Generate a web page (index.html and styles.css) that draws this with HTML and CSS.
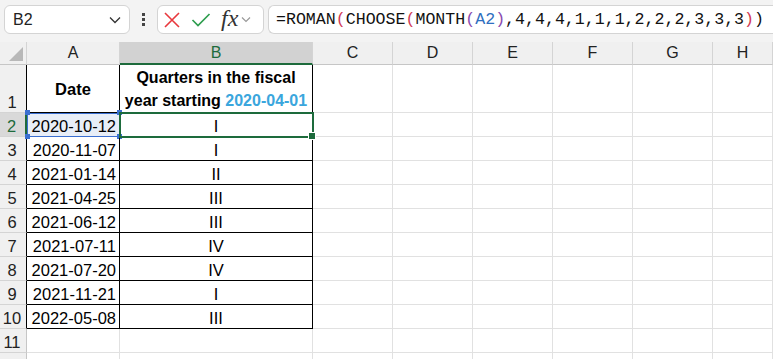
FILE: index.html
```html
<!DOCTYPE html>
<html lang="en">
<head>
    <meta charset="UTF-8">
    <title>ROMAN quarters</title>
    <link rel="stylesheet" href="styles.css">
</head>
<body>
    <div class="toolbar">
        <div class="namebox">
            <span>B2</span>
            <svg width="12" height="8" viewBox="0 0 12 8"><polyline points="1,1.5 6,6.5 11,1.5" fill="none" stroke="#333" stroke-width="1.3"/></svg>
        </div>
        <div class="dots"><i></i><i></i><i></i></div>
        <div class="fxbox">
            <svg width="18" height="18" viewBox="0 0 18 18"><path d="M2 2 L16 16 M16 2 L2 16" stroke="#e8383d" stroke-width="1.6" fill="none"/></svg>
            <svg width="20" height="18" viewBox="0 0 20 18"><polyline points="1.5,9 7,14.5 18.5,3" stroke="#2f9e4f" stroke-width="1.7" fill="none"/></svg>
            <span class="fx">fx</span>
            <svg width="10" height="7" viewBox="0 0 10 7"><polyline points="1,1.5 5,5.5 9,1.5" fill="none" stroke="#999" stroke-width="1.2"/></svg>
        </div>
        <div class="formula">=ROMAN<span class="p1">(</span>CHOOSE<span class="p1">(</span>MONTH<span class="p2">(</span><span class="ref">A2</span><span class="p2">)</span>,4,4,4,1,1,1,2,2,2,3,3,3<span class="p1">)</span>)</div>
    </div>

    <div class="sheet">
        <!-- column headers -->
        <div class="ch corner"><svg width="14" height="14" viewBox="0 0 14 14"><polygon points="14,0 14,14 0,14" fill="#b8b8b8"/></svg></div>
        <div class="ch">A</div>
        <div class="ch active">B</div>
        <div class="ch">C</div>
        <div class="ch">D</div>
        <div class="ch">E</div>
        <div class="ch">F</div>
        <div class="ch">G</div>
        <div class="ch">H</div>

        <!-- row 1 -->
        <div class="rh edge">1</div>
        <div class="c t head">Date</div>
        <div class="c t head wrap">Quarters in the fiscal<br>year starting <span class="blue">2020-04-01</span></div>
        <div class="c"></div><div class="c"></div><div class="c"></div><div class="c"></div><div class="c"></div><div class="c"></div>

        <!-- row 2 -->
        <div class="rh edge active">2</div>
        <div class="c t date dep">2020-10-12<i class="k tl"></i><i class="k tr"></i><i class="k bl"></i><i class="k br"></i></div>
        <div class="c t mid sel">I</div>
        <div class="c"></div><div class="c"></div><div class="c"></div><div class="c"></div><div class="c"></div><div class="c"></div>

        <div class="rh edge">3</div>
        <div class="c t date">2020-11-07</div>
        <div class="c t mid">I</div>
        <div class="c"></div><div class="c"></div><div class="c"></div><div class="c"></div><div class="c"></div><div class="c"></div>

        <div class="rh edge">4</div>
        <div class="c t date">2021-01-14</div>
        <div class="c t mid">II</div>
        <div class="c"></div><div class="c"></div><div class="c"></div><div class="c"></div><div class="c"></div><div class="c"></div>

        <div class="rh edge">5</div>
        <div class="c t date">2021-04-25</div>
        <div class="c t mid">III</div>
        <div class="c"></div><div class="c"></div><div class="c"></div><div class="c"></div><div class="c"></div><div class="c"></div>

        <div class="rh edge">6</div>
        <div class="c t date">2021-06-12</div>
        <div class="c t mid">III</div>
        <div class="c"></div><div class="c"></div><div class="c"></div><div class="c"></div><div class="c"></div><div class="c"></div>

        <div class="rh edge">7</div>
        <div class="c t date">2021-07-11</div>
        <div class="c t mid">IV</div>
        <div class="c"></div><div class="c"></div><div class="c"></div><div class="c"></div><div class="c"></div><div class="c"></div>

        <div class="rh edge">8</div>
        <div class="c t date">2021-07-20</div>
        <div class="c t mid">IV</div>
        <div class="c"></div><div class="c"></div><div class="c"></div><div class="c"></div><div class="c"></div><div class="c"></div>

        <div class="rh edge">9</div>
        <div class="c t date">2021-11-21</div>
        <div class="c t mid">I</div>
        <div class="c"></div><div class="c"></div><div class="c"></div><div class="c"></div><div class="c"></div><div class="c"></div>

        <div class="rh edge">10</div>
        <div class="c t date">2022-05-08</div>
        <div class="c t mid">III</div>
        <div class="c"></div><div class="c"></div><div class="c"></div><div class="c"></div><div class="c"></div><div class="c"></div>

        <div class="rh">11</div>
        <div class="c"></div><div class="c"></div>
        <div class="c"></div><div class="c"></div><div class="c"></div><div class="c"></div><div class="c"></div><div class="c"></div>

        <div class="rh"></div>
        <div class="c"></div><div class="c"></div>
        <div class="c"></div><div class="c"></div><div class="c"></div><div class="c"></div><div class="c"></div><div class="c"></div>
    </div>
</body>
</html>
```

FILE: styles.css
```css
body {
    margin: 0;
    width: 773px;
    height: 359px;
    overflow: hidden;
    background: #fff;
    font-family: "Liberation Sans", Arial, sans-serif;
    color: #000;
}

.toolbar {
    height: 42px;
    background: #f3f3f3;
    display: flex;
    align-items: flex-start;
    padding-top: 5px;
    box-sizing: border-box;
}

.namebox {
    margin-left: 4px;
    width: 126px;
    height: 29px;
    background: #fff;
    border: 1px solid #d4d4d4;
    border-radius: 6px;
    box-sizing: border-box;
    display: flex;
    align-items: center;
    justify-content: space-between;
    padding: 0 8px 0 8px;
    font-size: 16px;
    color: #222;
}

.dots {
    width: 27px;
    height: 29px;
    display: flex;
    flex-direction: column;
    align-items: center;
    justify-content: center;
    gap: 2px;
}

.dots i {
    display: block;
    width: 3px;
    height: 3px;
    background: #444;
}

.fxbox {
    width: 107px;
    height: 29px;
    background: #fff;
    border: 1px solid #d4d4d4;
    border-radius: 6px;
    box-sizing: border-box;
    display: flex;
    align-items: center;
    padding-left: 5px;
    gap: 10px;
}

.fxbox .fx {
    font-family: "Liberation Serif", serif;
    font-style: italic;
    font-size: 24px;
    color: #333;
    line-height: 1;
    margin-top: -4px;
}

.fxbox svg:last-child {
    margin-left: -7px;
}

.formula {
    margin-left: 4px;
    flex: 1;
    height: 29px;
    background: #fff;
    border: 1px solid #d4d4d4;
    border-right: none;
    border-radius: 6px 0 0 6px;
    box-sizing: border-box;
    padding-left: 7px;
    font-family: "Liberation Mono", monospace;
    font-size: 16.6px;
    line-height: 28px;
    white-space: nowrap;
    color: #111;
}

.p1 { color: #d23a55; }
.p2 { color: #8a4bb0; }
.ref { color: #2f6fc0; }

.sheet {
    display: grid;
    grid-template-columns: 27px 93px 193px 80px 80px 80px 80px 80px 1fr;
    grid-template-rows: 23px 48px repeat(11, 24px);
}

.ch {
    background: #f0f0f0;
    border-right: 1px solid #d4d4d4;
    border-bottom: 1px solid #c6c6c6;
    box-sizing: border-box;
    text-align: center;
    font-size: 16px;
    line-height: 22px;
    color: #222;
}

.ch.corner {
    display: flex;
    align-items: flex-end;
    justify-content: flex-end;
    padding: 0 3px 3px 0;
}

.ch.active {
    background: #d2d2d2;
    color: #1d6b3c;
    border-bottom: 2px solid #1d6b3c;
}

.rh {
    background: #f0f0f0;
    border-right: 1px solid #c6c6c6;
    border-bottom: 1px solid #d4d4d4;
    box-sizing: border-box;
    font-size: 16.5px;
    line-height: 20px;
    display: flex;
    align-items: flex-end;
    justify-content: center;
    padding-right: 2px;
    color: #222;
}

.rh.edge {
    border-right-color: #000;
}

.rh.active {
    background: #d9d9d9;
    color: #1d6b3c;
    border-right: 2px solid #1d6b3c;
}

.c {
    border-right: 1px solid #e1e1e1;
    border-bottom: 1px solid #e1e1e1;
    box-sizing: border-box;
    font-size: 16.5px;
    line-height: 20px;
    display: flex;
    align-items: flex-end;
    white-space: nowrap;
    position: relative;
}

.c.t {
    border-right-color: #000;
    border-bottom-color: #000;
}

.head {
    font-weight: bold;
    align-items: center;
    justify-content: center;
}

.wrap {
    white-space: nowrap;
    text-align: center;
    line-height: 23px;
    display: block;
    padding-top: 1px;
    font-size: 16px;
}

.blue {
    color: #3aa6dd;
}

.date {
    justify-content: flex-end;
    padding-right: 3px;
}

.mid {
    justify-content: center;
}

.dep {
    background: #e8eef7;
    outline: 1px solid #3b6fd0;
    outline-offset: -1px;
}

.k {
    position: absolute;
    width: 5px;
    height: 5px;
    background: #3b6fd0;
}

.k.tl { left: -2px; top: -3px; }
.k.tr { right: -3px; top: -3px; }
.k.bl { left: -2px; bottom: -3px; }
.k.br { right: -3px; bottom: -3px; }

.sel {
    outline: 2px solid #1d6b3c;
    outline-offset: -1px;
    z-index: 1;
}

.sel::after {
    content: "";
    position: absolute;
    right: -4px;
    bottom: -4px;
    width: 6px;
    height: 6px;
    background: #1d6b3c;
    border: 1px solid #fff;
}
```
